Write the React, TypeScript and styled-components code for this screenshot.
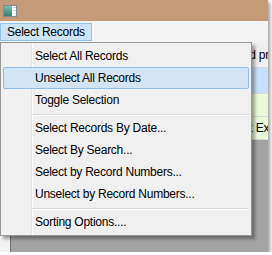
import styled, { createGlobalStyle } from 'styled-components'

const GlobalStyle = createGlobalStyle`
  html, body {
    margin: 0;
    padding: 0;
    background: #fff;
  }
  body {
    font-family: "Segoe UI", "Liberation Sans", Arial, sans-serif;
    font-size: 12px;
    letter-spacing: -0.25px;
    color: #000;
  }
`

const Window = styled.div`
  position: relative;
  width: 268px;
  height: 252px;
  display: flex;
  flex-direction: column;
  overflow: hidden;
  box-shadow: 2px 2px 4px rgba(0, 0, 0, 0.4);
`

const TitleBar = styled.div`
  height: 21px;
  flex: none;
  display: flex;
  align-items: center;
  padding-left: 3px;
  background: #c49a77;
`

const MenuBar = styled.div`
  height: 21px;
  flex: none;
  display: flex;
  align-items: flex-start;
  padding-top: 2px;
  box-sizing: border-box;
  background: #f3f3f3;
`

const MenuTitle = styled.div`
  height: 18px;
  box-sizing: border-box;
  display: flex;
  align-items: center;
  padding: 0 6px;
  border: 1px solid #93c2ec;
  background: #cce4f7;
`

const Content = styled.div`
  flex: 1;
  display: flex;
  flex-direction: column;
  background: #f2f2f2;
`

const GridRow = styled.div<{ $bg: string; $h: number; $indent?: number }>`
  height: ${p => p.$h}px;
  flex: none;
  box-sizing: border-box;
  display: flex;
  align-items: center;
  padding-left: ${p => p.$indent ?? 0}px;
  white-space: nowrap;
  background: ${p => p.$bg};
  border-bottom: 1px solid #d9d9d9;
`

const GrayArea = styled.div`
  flex: 1;
  margin-left: 10px;
  border-left: 1px solid #6e6e6e;
  background: #a3a3a3;
`

const Dropdown = styled.div`
  position: absolute;
  left: 0;
  top: 42px;
  width: 252px;
  box-sizing: border-box;
  padding: 2px;
  border: 1px solid #979797;
  background:
    linear-gradient(to right, transparent 30px, #e2e3e3 30px, #e2e3e3 31px, #fff 31px, #fff 32px, transparent 32px),
    #f0f0f0;
  box-shadow: 3px 3px 3px rgba(0, 0, 0, 0.35);
`

const Item = styled.div<{ $active?: boolean }>`
  height: 22px;
  box-sizing: border-box;
  display: flex;
  align-items: center;
  padding-left: 31px;
  border: 1px solid ${p => (p.$active ? '#8fbbe6' : 'transparent')};
  border-radius: 2px;
  background: ${p => (p.$active ? '#d3e4f5' : 'transparent')};
  white-space: nowrap;
`

const Separator = styled.div`
  height: 1px;
  margin: 3px 0 1px 29px;
  background: #dcdcdc;
  border-bottom: 1px solid #fff;
`

function AppIcon() {
  return (
    <svg width="14" height="12" viewBox="0 0 14 12">
      <defs>
        <linearGradient id="ic" x1="0" y1="0" x2="0" y2="1">
          <stop offset="0" stopColor="#7cc3b4" />
          <stop offset="1" stopColor="#2f7f70" />
        </linearGradient>
      </defs>
      <rect x="0.5" y="0.5" width="13" height="11" fill="#fff" stroke="#7d8a96" />
      <rect x="1" y="1" width="8" height="10" fill="url(#ic)" />
      <rect x="10" y="2" width="3" height="1" fill="#b9cde0" />
      <rect x="10" y="5" width="3" height="1" fill="#b9cde0" />
    </svg>
  )
}

export default function App() {
  return (
    <>
      <GlobalStyle />
      <Window>
        <TitleBar>
          <AppIcon />
        </TitleBar>
        <MenuBar>
          <MenuTitle>Select Records</MenuTitle>
        </MenuBar>
        <Content>
          <GridRow $bg="#f0f0f0" $h={26} $indent={211}>Selected pro</GridRow>
          <GridRow $bg="#c8e0f9" $h={26} />
          <GridRow $bg="#ebf9d9" $h={23} />
          <GridRow $bg="#ebf9d9" $h={23} $indent={231}>Last Exp</GridRow>
          <GrayArea />
        </Content>
        <Dropdown>
          <Item>Select All Records</Item>
          <Item $active>Unselect All Records</Item>
          <Item>Toggle Selection</Item>
          <Separator />
          <Item>Select Records By Date...</Item>
          <Item>Select By Search...</Item>
          <Item>Select by Record Numbers...</Item>
          <Item>Unselect by Record Numbers...</Item>
          <Separator />
          <Item>Sorting Options....</Item>
        </Dropdown>
      </Window>
    </>
  )
}
